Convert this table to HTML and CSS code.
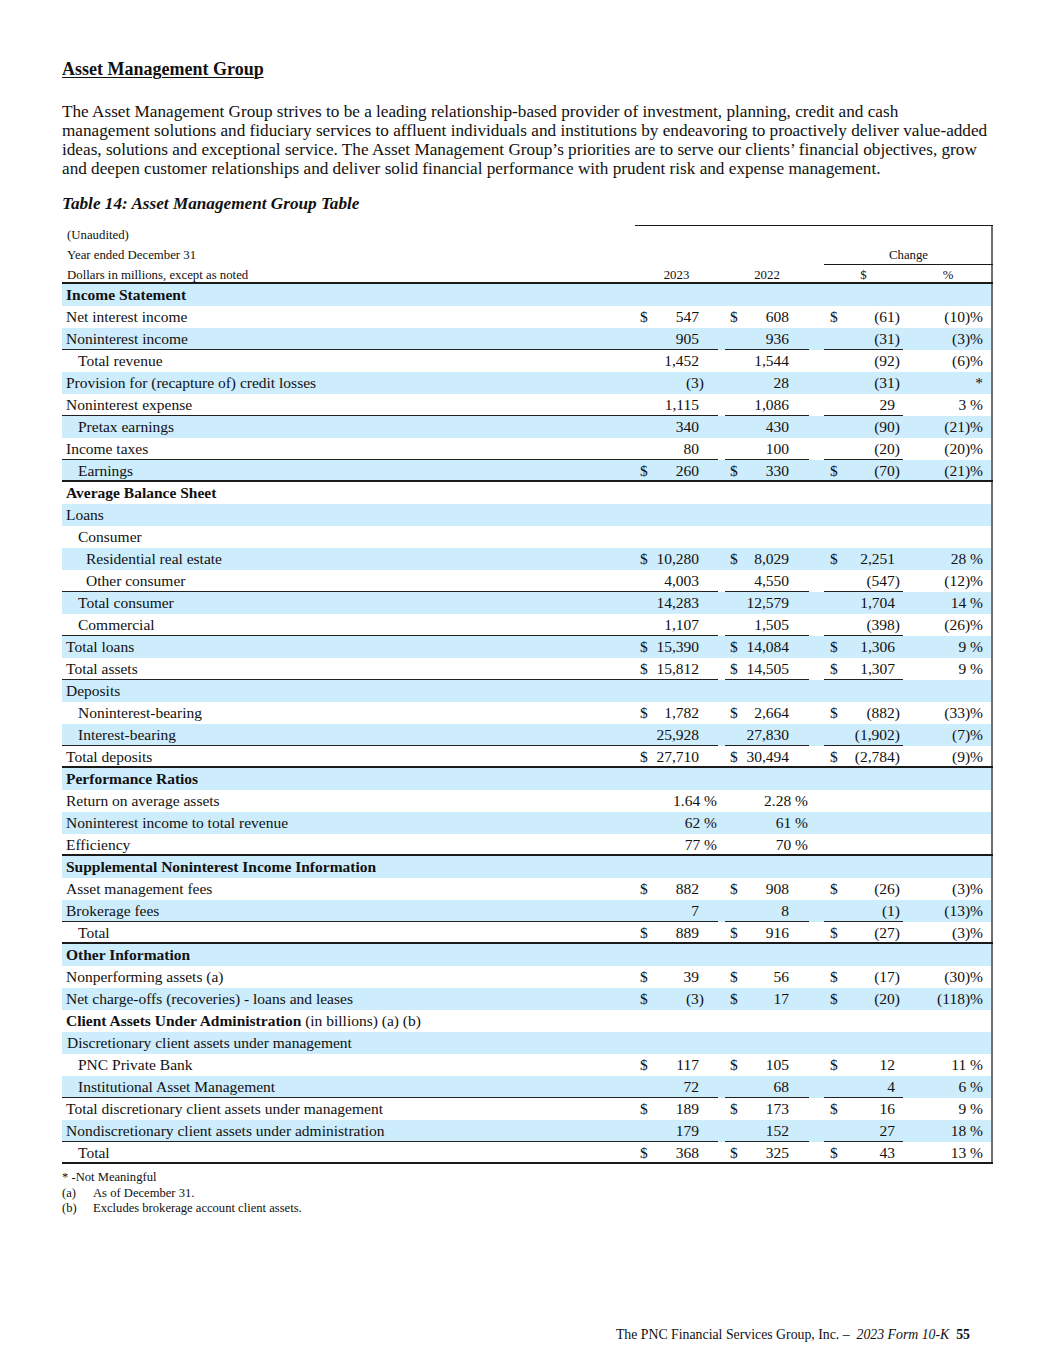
FILE: index.html
```html
<!DOCTYPE html>
<html lang="en">
<head>
<meta charset="utf-8">
<title>Asset Management Group</title>
<link rel="stylesheet" href="styles.css">
</head>
<body>
<div class="page">
  <h1 class="title">Asset Management Group</h1>
  <p class="intro">The Asset Management Group strives to be a leading relationship-based provider of investment, planning, credit and cash<br>management solutions and fiduciary services to affluent individuals and institutions by endeavoring to proactively deliver value-added<br>ideas, solutions and exceptional service. The Asset Management Group’s priorities are to serve our clients’ financial objectives, grow<br>and deepen customer relationships and deliver solid financial performance with prudent risk and expense management.</p>
  <p class="caption">Table 14: Asset Management Group Table</p>

  <table class="fin">
    <colgroup>
      <col class="w-l"><col class="w-c1"><col class="w-g1"><col class="w-c2"><col class="w-g2"><col class="w-c3"><col class="w-c4">
    </colgroup>
    <thead>
      <tr class="h1"><td class="hl">(Unaudited)</td><td class="top" colspan="6"></td></tr>
      <tr class="h2"><td class="hl">Year ended December 31</td><td colspan="4"></td><td class="chg" colspan="2">Change</td></tr>
      <tr class="h3"><td class="hl">Dollars in millions, except as noted</td><td class="hc">2023</td><td class="hg"></td><td class="hc">2022</td><td class="hg"></td><td class="hc">$</td><td class="hc hr">%</td></tr>
    </thead>
    <tbody>
      <tr><td class="l b">Income Statement</td><td class="c1"></td><td class="g"></td><td class="c2"></td><td class="g"></td><td class="c3"></td><td class="c4"></td></tr>
      <tr><td class="l">Net interest income</td><td class="c1"><span class="d">$</span>547</td><td class="g"></td><td class="c2"><span class="d">$</span>608</td><td class="g"></td><td class="c3"><span class="d">$</span>(61<span class="cp">)</span></td><td class="c4">(10)%</td></tr>
      <tr class="ul"><td class="l">Noninterest income</td><td class="c1">905</td><td class="g"></td><td class="c2">936</td><td class="g"></td><td class="c3">(31<span class="cp">)</span></td><td class="c4">(3)%</td></tr>
      <tr><td class="l i1">Total revenue</td><td class="c1">1,452</td><td class="g"></td><td class="c2">1,544</td><td class="g"></td><td class="c3">(92<span class="cp">)</span></td><td class="c4">(6)%</td></tr>
      <tr><td class="l">Provision for (recapture of) credit losses</td><td class="c1">(3<span class="cp">)</span></td><td class="g"></td><td class="c2">28</td><td class="g"></td><td class="c3">(31<span class="cp">)</span></td><td class="c4">*</td></tr>
      <tr class="ul"><td class="l">Noninterest expense</td><td class="c1">1,115</td><td class="g"></td><td class="c2">1,086</td><td class="g"></td><td class="c3">29</td><td class="c4">3 %</td></tr>
      <tr><td class="l i1">Pretax earnings</td><td class="c1">340</td><td class="g"></td><td class="c2">430</td><td class="g"></td><td class="c3">(90<span class="cp">)</span></td><td class="c4">(21)%</td></tr>
      <tr class="ul"><td class="l">Income taxes</td><td class="c1">80</td><td class="g"></td><td class="c2">100</td><td class="g"></td><td class="c3">(20<span class="cp">)</span></td><td class="c4">(20)%</td></tr>
      <tr class="tk"><td class="l i1">Earnings</td><td class="c1"><span class="d">$</span>260</td><td class="g"></td><td class="c2"><span class="d">$</span>330</td><td class="g"></td><td class="c3"><span class="d">$</span>(70<span class="cp">)</span></td><td class="c4">(21)%</td></tr>

      <tr><td class="l b">Average Balance Sheet</td><td class="c1"></td><td class="g"></td><td class="c2"></td><td class="g"></td><td class="c3"></td><td class="c4"></td></tr>
      <tr><td class="l">Loans</td><td class="c1"></td><td class="g"></td><td class="c2"></td><td class="g"></td><td class="c3"></td><td class="c4"></td></tr>
      <tr><td class="l i1">Consumer</td><td class="c1"></td><td class="g"></td><td class="c2"></td><td class="g"></td><td class="c3"></td><td class="c4"></td></tr>
      <tr><td class="l i2">Residential real estate</td><td class="c1"><span class="d">$</span>10,280</td><td class="g"></td><td class="c2"><span class="d">$</span>8,029</td><td class="g"></td><td class="c3"><span class="d">$</span>2,251</td><td class="c4">28 %</td></tr>
      <tr class="ul"><td class="l i2">Other consumer</td><td class="c1">4,003</td><td class="g"></td><td class="c2">4,550</td><td class="g"></td><td class="c3">(547<span class="cp">)</span></td><td class="c4">(12)%</td></tr>
      <tr><td class="l i1">Total consumer</td><td class="c1">14,283</td><td class="g"></td><td class="c2">12,579</td><td class="g"></td><td class="c3">1,704</td><td class="c4">14 %</td></tr>
      <tr class="ul"><td class="l i1">Commercial</td><td class="c1">1,107</td><td class="g"></td><td class="c2">1,505</td><td class="g"></td><td class="c3">(398<span class="cp">)</span></td><td class="c4">(26)%</td></tr>
      <tr><td class="l">Total loans</td><td class="c1"><span class="d">$</span>15,390</td><td class="g"></td><td class="c2"><span class="d">$</span>14,084</td><td class="g"></td><td class="c3"><span class="d">$</span>1,306</td><td class="c4">9 %</td></tr>
      <tr class="ul"><td class="l">Total assets</td><td class="c1"><span class="d">$</span>15,812</td><td class="g"></td><td class="c2"><span class="d">$</span>14,505</td><td class="g"></td><td class="c3"><span class="d">$</span>1,307</td><td class="c4">9 %</td></tr>
      <tr><td class="l">Deposits</td><td class="c1"></td><td class="g"></td><td class="c2"></td><td class="g"></td><td class="c3"></td><td class="c4"></td></tr>
      <tr><td class="l i1">Noninterest-bearing</td><td class="c1"><span class="d">$</span>1,782</td><td class="g"></td><td class="c2"><span class="d">$</span>2,664</td><td class="g"></td><td class="c3"><span class="d">$</span>(882<span class="cp">)</span></td><td class="c4">(33)%</td></tr>
      <tr class="ul"><td class="l i1">Interest-bearing</td><td class="c1">25,928</td><td class="g"></td><td class="c2">27,830</td><td class="g"></td><td class="c3">(1,902<span class="cp">)</span></td><td class="c4">(7)%</td></tr>
      <tr class="tk"><td class="l">Total deposits</td><td class="c1"><span class="d">$</span>27,710</td><td class="g"></td><td class="c2"><span class="d">$</span>30,494</td><td class="g"></td><td class="c3"><span class="d">$</span>(2,784<span class="cp">)</span></td><td class="c4">(9)%</td></tr>

      <tr><td class="l b">Performance Ratios</td><td class="c1"></td><td class="g"></td><td class="c2"></td><td class="g"></td><td class="c3"></td><td class="c4"></td></tr>
      <tr><td class="l">Return on average assets</td><td class="c1 pr">1.64 %</td><td class="g"></td><td class="c2 pr">2.28 %</td><td class="g"></td><td class="c3"></td><td class="c4"></td></tr>
      <tr><td class="l">Noninterest income to total revenue</td><td class="c1 pr">62 %</td><td class="g"></td><td class="c2 pr">61 %</td><td class="g"></td><td class="c3"></td><td class="c4"></td></tr>
      <tr class="tk"><td class="l">Efficiency</td><td class="c1 pr">77 %</td><td class="g"></td><td class="c2 pr">70 %</td><td class="g"></td><td class="c3"></td><td class="c4"></td></tr>

      <tr><td class="l b">Supplemental Noninterest Income Information</td><td class="c1"></td><td class="g"></td><td class="c2"></td><td class="g"></td><td class="c3"></td><td class="c4"></td></tr>
      <tr><td class="l">Asset management fees</td><td class="c1"><span class="d">$</span>882</td><td class="g"></td><td class="c2"><span class="d">$</span>908</td><td class="g"></td><td class="c3"><span class="d">$</span>(26<span class="cp">)</span></td><td class="c4">(3)%</td></tr>
      <tr class="ul"><td class="l">Brokerage fees</td><td class="c1">7</td><td class="g"></td><td class="c2">8</td><td class="g"></td><td class="c3">(1<span class="cp">)</span></td><td class="c4">(13)%</td></tr>
      <tr class="tk"><td class="l i1">Total</td><td class="c1"><span class="d">$</span>889</td><td class="g"></td><td class="c2"><span class="d">$</span>916</td><td class="g"></td><td class="c3"><span class="d">$</span>(27<span class="cp">)</span></td><td class="c4">(3)%</td></tr>

      <tr><td class="l b">Other Information</td><td class="c1"></td><td class="g"></td><td class="c2"></td><td class="g"></td><td class="c3"></td><td class="c4"></td></tr>
      <tr><td class="l">Nonperforming assets (a)</td><td class="c1"><span class="d">$</span>39</td><td class="g"></td><td class="c2"><span class="d">$</span>56</td><td class="g"></td><td class="c3"><span class="d">$</span>(17<span class="cp">)</span></td><td class="c4">(30)%</td></tr>
      <tr><td class="l">Net charge-offs (recoveries) - loans and leases</td><td class="c1"><span class="d">$</span>(3<span class="cp">)</span></td><td class="g"></td><td class="c2"><span class="d">$</span>17</td><td class="g"></td><td class="c3"><span class="d">$</span>(20<span class="cp">)</span></td><td class="c4">(118)%</td></tr>
      <tr><td class="l"><span class="b">Client Assets Under Administration</span> (in billions) (a) (b)</td><td class="c1"></td><td class="g"></td><td class="c2"></td><td class="g"></td><td class="c3"></td><td class="c4"></td></tr>
      <tr><td class="l i0">Discretionary client assets under management</td><td class="c1"></td><td class="g"></td><td class="c2"></td><td class="g"></td><td class="c3"></td><td class="c4"></td></tr>
      <tr><td class="l i1">PNC Private Bank</td><td class="c1"><span class="d">$</span>117</td><td class="g"></td><td class="c2"><span class="d">$</span>105</td><td class="g"></td><td class="c3"><span class="d">$</span>12</td><td class="c4">11 %</td></tr>
      <tr class="ul"><td class="l i1">Institutional Asset Management</td><td class="c1">72</td><td class="g"></td><td class="c2">68</td><td class="g"></td><td class="c3">4</td><td class="c4">6 %</td></tr>
      <tr><td class="l">Total discretionary client assets under management</td><td class="c1"><span class="d">$</span>189</td><td class="g"></td><td class="c2"><span class="d">$</span>173</td><td class="g"></td><td class="c3"><span class="d">$</span>16</td><td class="c4">9 %</td></tr>
      <tr class="ul"><td class="l">Nondiscretionary client assets under administration</td><td class="c1">179</td><td class="g"></td><td class="c2">152</td><td class="g"></td><td class="c3">27</td><td class="c4">18 %</td></tr>
      <tr class="tk"><td class="l i1">Total</td><td class="c1"><span class="d">$</span>368</td><td class="g"></td><td class="c2"><span class="d">$</span>325</td><td class="g"></td><td class="c3"><span class="d">$</span>43</td><td class="c4">13 %</td></tr>
    </tbody>
  </table>

  <div class="notes">
    <div class="note-star">* -Not Meaningful</div>
    <div class="note"><span class="mk">(a)</span><span>As of December 31.</span></div>
    <div class="note"><span class="mk">(b)</span><span>Excludes brokerage account client assets.</span></div>
  </div>

  <div class="footer">The PNC Financial Services Group, Inc. –&nbsp; <em>2023 Form 10-K</em>&nbsp; <strong>55</strong></div>
</div>
</body>
</html>
```

FILE: styles.css
```css
html, body {
  margin: 0;
  padding: 0;
  background: #ffffff;
}

body {
  font-family: "Liberation Serif", "Times New Roman", serif;
  color: #111111;
}

.page {
  width: 931px;
  padding: 58px 0 0 62px;
}

.title {
  margin: 0;
  font-size: 18px;
  line-height: 22px;
  font-weight: bold;
  text-decoration: underline;
  text-decoration-thickness: 1px;
  text-underline-offset: 2px;
}

.intro {
  margin: 22px 0 0 0;
  font-size: 17.2px;
  line-height: 19px;
  white-space: nowrap;
}

.caption {
  margin: 16px 0 0 0;
  font-size: 17.2px;
  line-height: 20px;
  font-weight: bold;
  font-style: italic;
}

/* ---------- table ---------- */
.fin {
  margin-top: 11px;
  width: 931px;
  table-layout: fixed;
  border-collapse: separate;
  border-spacing: 0;
  font-size: 15.5px;
}

.w-l  { width: 573px; }
.w-c1 { width: 83px; }
.w-g1 { width: 7px; }
.w-c2 { width: 84px; }
.w-g2 { width: 15px; }
.w-c3 { width: 79px; }
.w-c4 { width: 90px; }

.fin td {
  padding: 0;
  white-space: nowrap;
}

/* header */
.fin thead td {
  font-size: 12.8px;
  height: 20px;
  line-height: 20px;
}
.fin thead .h3 td {
  height: 19px;
  line-height: 18px;
  box-shadow: inset 0 -2px 0 #1a1a1a;
}
.fin thead .h3 td.hr {
  box-shadow: inset 0 -2px 0 #1a1a1a, inset -2px 0 0 #6f6f6f;
}
.hl { padding-left: 5px !important; }
.hc { text-align: center; }
.top {
  box-shadow: inset 0 1px 0 #1a1a1a, inset -2px 0 0 #6f6f6f;
}
.chg {
  text-align: center;
  box-shadow: inset 0 -1px 0 #1a1a1a, inset -2px 0 0 #6f6f6f;
}

/* body rows */
.fin tbody td {
  height: 22px;
  line-height: 22px;
}
.fin tbody tr:nth-child(odd) {
  background: #cdecfc;
}

.l { padding-left: 4px !important; }
.l.i0 { padding-left: 5px !important; }
.l.i1 { padding-left: 16px !important; }
.l.i2 { padding-left: 24px !important; }
.b { font-weight: bold; }

.c1, .c2, .c3, .c4 { text-align: right; }
.c1 { padding: 0 19px 0 5px !important; }
.c2 { padding: 0 20px 0 5px !important; }
.c3 { padding: 0 8px 0 6px !important; }
.c4 { padding: 0 10px 0 0 !important; box-shadow: inset -2px 0 0 #6f6f6f; }
.c1.pr { padding-right: 1px !important; }
.c2.pr { padding-right: 1px !important; }

.d { float: left; }
.cp { margin-right: -5px; }

.ul .l, .ul .c1, .ul .c2, .ul .c3 {
  box-shadow: inset 0 -1px 0 #222222;
}

.tk td {
  box-shadow: inset 0 -2px 0 #1a1a1a;
}
.tk td.c4 {
  box-shadow: inset 0 -2px 0 #1a1a1a, inset -2px 0 0 #6f6f6f;
}

/* notes */
.notes {
  margin-top: 6px;
  font-size: 12.6px;
  line-height: 15.5px;
}
.note {
  display: flex;
}
.mk {
  width: 31px;
  flex: none;
}

.footer {
  margin-top: 110px;
  padding-right: 23px;
  text-align: right;
  font-size: 13.8px;
  line-height: 16px;
}
.footer em { font-style: italic; }
.footer strong { font-weight: bold; }
```
